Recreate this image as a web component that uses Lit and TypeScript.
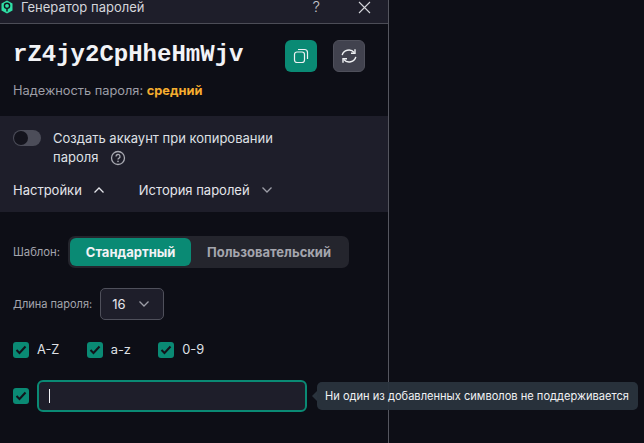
import { LitElement, html, css } from 'lit';
import { customElement } from 'lit/decorators.js';

@customElement('app-root')
export class AppRoot extends LitElement {
    static styles = css`
      :host {
        display: block;
        width: 644px;
        height: 443px;
        overflow: hidden;
        position: relative;
        background: #0d0e16;
        font-family: Inter, 'Noto Sans', sans-serif;
        color: #e8e9ee;
      }

      .panel {
        width: 389px;
        height: 443px;
        box-sizing: border-box;
        border-right: 1px solid #55565f;
      }

      .title-bar {
        height: 24px;
        box-sizing: border-box;
        display: flex;
        align-items: center;
        background: #1e1e2a;
        border-bottom: 1px solid #4c4d57;
        padding: 0 17px 9px 1px;
        font-size: 13px;
        line-height: 14px;
        color: #d4d5da;
      }

      .title-bar .logo {
        margin-right: 8px;
        flex: none;
      }

      .title-bar .name {
        flex: 1;
      }

      .title-bar .help {
        margin-right: 38px;
        font-size: 15px;
        font-weight: 300;
        color: #c4c5cb;
      }

      .pass-row {
        display: flex;
        padding: 16px 0 11px 13px;
      }

      .password {
        width: 272px;
        font-family: 'Liberation Mono', 'DejaVu Sans Mono', monospace;
        font-size: 24px;
        line-height: 30px;
        font-weight: 700;
        color: #f2f3f6;
      }

      .icon-btn {
        width: 32px;
        height: 32px;
        box-sizing: border-box;
        border-radius: 6px;
        display: flex;
        align-items: center;
        justify-content: center;
      }

      .icon-btn.copy {
        background: #0a8a74;
        margin-right: 16px;
      }

      .icon-btn.refresh {
        background: #41424e;
        border: 1px solid #4f505b;
      }

      .strength {
        padding-left: 13px;
        font-size: 12.8px;
        line-height: 16px;
        color: #9d9ea7;
      }

      .strength b {
        color: #f5ad2f;
        font-weight: 700;
      }

      .account {
        margin-top: 17px;
        height: 96px;
        box-sizing: border-box;
        background: #1e1e2a;
        padding: 13px 13px 0;
      }

      .account-row {
        display: flex;
      }

      .toggle {
        width: 28px;
        height: 16px;
        margin: 1px 12px 0 0;
        border-radius: 8px;
        background: #4c4d59;
        position: relative;
        flex: none;
      }

      .toggle::after {
        content: '';
        position: absolute;
        left: 1px;
        top: 1px;
        width: 14px;
        height: 14px;
        border-radius: 50%;
        background: #14141d;
      }

      .account-text {
        font-size: 13px;
        line-height: 19px;
        color: #dfe0e5;
      }

      .account-text svg {
        vertical-align: -4px;
        margin-left: 8px;
      }

      .links {
        display: flex;
        margin-top: 13px;
        font-size: 13px;
        line-height: 20px;
        color: #e4e5ea;
      }

      .link {
        display: flex;
        align-items: center;
        gap: 11px;
      }

      .link + .link {
        margin-left: 34px;
      }

      .settings {
        padding: 24px 13px 0;
      }

      .template {
        display: flex;
        align-items: center;
        font-size: 11.3px;
        color: #a4a5ad;
      }

      .segments {
        display: flex;
        margin-left: 8px;
        padding: 2px;
        border-radius: 7px;
        background: #24252d;
        width: 281px;
        box-sizing: border-box;
        font-size: 13px;
        font-weight: 700;
      }

      .segment {
        height: 28px;
        display: flex;
        align-items: center;
        justify-content: center;
        border-radius: 6px;
      }

      .segment.on {
        width: 121px;
        background: #0a8a74;
        color: #f2f3f6;
      }

      .segment.off {
        flex: 1;
        color: #a4a5ad;
      }

      .length {
        display: flex;
        align-items: center;
        margin-top: 20px;
        font-size: 11px;
        color: #a4a5ad;
      }

      .select {
        width: 64px;
        height: 32px;
        box-sizing: border-box;
        margin-left: 8px;
        padding: 0 13px 0 11px;
        display: flex;
        align-items: center;
        justify-content: space-between;
        border: 1px solid #4f505b;
        border-radius: 5px;
        background: #1e1e2a;
        font-size: 13px;
        color: #e8e9ee;
      }

      .checks {
        display: flex;
        margin-top: 22px;
        font-size: 12.8px;
        line-height: 16px;
        color: #dfe0e5;
      }

      .check-item {
        display: flex;
        align-items: center;
        gap: 8px;
        margin-right: 27.4px;
      }

      .box {
        width: 16px;
        height: 16px;
        border-radius: 3px;
        background: #0a8a74;
        display: flex;
        align-items: center;
        justify-content: center;
        flex: none;
      }

      .custom {
        display: flex;
        align-items: center;
        gap: 8px;
        margin-top: 22px;
      }

      .input {
        width: 270px;
        height: 32px;
        box-sizing: border-box;
        border: 2px solid #0a8a74;
        border-radius: 6px;
        background: #1e1e2a;
        display: flex;
        align-items: center;
        padding-left: 10px;
      }

      .caret {
        width: 1px;
        height: 14px;
        background: #f2f3f6;
      }

      .tooltip {
        position: absolute;
        left: 317px;
        top: 382px;
        height: 28px;
        box-sizing: border-box;
        padding: 0 9px 0 8px;
        display: flex;
        align-items: center;
        background: rgba(42, 51, 61, 0.96);
        border-radius: 5px;
        font-size: 11.1px;
        color: #f0f1f4;
        white-space: nowrap;
      }

      .tooltip::before {
        content: '';
        position: absolute;
        left: -5px;
        top: 9px;
        width: 0;
        height: 0;
        border-top: 5px solid transparent;
        border-bottom: 5px solid transparent;
        border-right: 5px solid #2a333d;
      }
    `;

    private chevron(up: boolean, color: string) {
        return html`<svg width="12" height="8" viewBox="0 0 12 8" fill="none">
          <path d=${up ? 'M1.5 6.5 6 2l4.5 4.5' : 'M1.5 1.5 6 6l4.5-4.5'} stroke=${color} stroke-width="1.3"/>
        </svg>`;
    }

    private box() {
        return html`<span class="box"><svg width="12" height="10" viewBox="0 0 12 10" fill="none">
          <path d="M1.5 5 4.5 8 10.5 1.5" stroke="#12131b" stroke-width="2"/>
        </svg></span>`;
    }

    render() {
        return html`
      <div class="panel">
        <div class="title-bar">
          <svg class="logo" width="12" height="14" viewBox="0 0 12 14" fill="none">
            <path d="M6 0.5 11.5 3.5V10.5L6 13.5 0.5 10.5V3.5Z" fill="#2fe0a6"/>
            <circle cx="6" cy="5.8" r="2.6" fill="none" stroke="#12131b" stroke-width="1.4"/>
            <path d="M6 8.5V11.5" stroke="#12131b" stroke-width="1.4"/>
          </svg>
          <span class="name">Генератор паролей</span>
          <span class="help">?</span>
          <svg width="13" height="13" viewBox="0 0 13 13" fill="none">
            <path d="M1 1 12 12M12 1 1 12" stroke="#d4d5da" stroke-width="1.1"/>
          </svg>
        </div>

        <div class="pass-row">
          <span class="password">rZ4jy2CpHheHmWjv</span>
          <span class="icon-btn copy">
            <svg width="16" height="16" viewBox="0 0 16 16" fill="none" stroke="#eef0f2" stroke-width="1.2">
              <rect x="1.5" y="4" width="10" height="10.5" rx="2.5"/>
              <path d="M5 1.5H11.5A3 3 0 0 1 14.5 4.5V11"/>
            </svg>
          </span>
          <span class="icon-btn refresh">
            <svg width="16" height="16" viewBox="0 0 16 16" fill="none" stroke="#eef0f2" stroke-width="1.4">
              <path d="M1.2 7.2A6.8 6.3 0 0 1 13.2 4.5"/>
              <path d="M14 1.2V5.2H10"/>
              <path d="M14.8 8.8A6.8 6.3 0 0 1 2.8 11.5"/>
              <path d="M2 14.8V10.8H6"/>
            </svg>
          </span>
        </div>

        <div class="strength">Надежность пароля: <b>средний</b></div>

        <div class="account">
          <div class="account-row">
            <span class="toggle"></span>
            <span class="account-text">
              Создать аккаунт при копировании<br />пароля
              <svg width="16" height="16" viewBox="0 0 16 16" fill="none">
                <circle cx="8" cy="8" r="6.5" stroke="#a9aab2" stroke-width="1.3"/>
                <path d="M6 6.5A2 2 0 1 1 8.8 8.3C8.2 8.6 8 9 8 9.6" stroke="#a9aab2" stroke-width="1.3"/>
                <circle cx="8" cy="11.4" r="0.8" fill="#a9aab2"/>
              </svg>
            </span>
          </div>
          <div class="links">
            <span class="link">Настройки ${this.chevron(true, '#e4e5ea')}</span>
            <span class="link">История паролей ${this.chevron(false, '#9d9ea7')}</span>
          </div>
        </div>

        <div class="settings">
          <div class="template">
            Шаблон:
            <div class="segments">
              <span class="segment on">Стандартный</span>
              <span class="segment off">Пользовательский</span>
            </div>
          </div>

          <div class="length">
            Длина пароля:
            <span class="select">16 ${this.chevron(false, '#9d9ea7')}</span>
          </div>

          <div class="checks">
            <span class="check-item">${this.box()} A-Z</span>
            <span class="check-item">${this.box()} a-z</span>
            <span class="check-item">${this.box()} 0-9</span>
          </div>

          <div class="custom">
            ${this.box()}
            <div class="input"><span class="caret"></span></div>
          </div>
        </div>
      </div>
      <div class="tooltip">Ни один из добавленных символов не поддерживается</div>
    `;
    }
}
